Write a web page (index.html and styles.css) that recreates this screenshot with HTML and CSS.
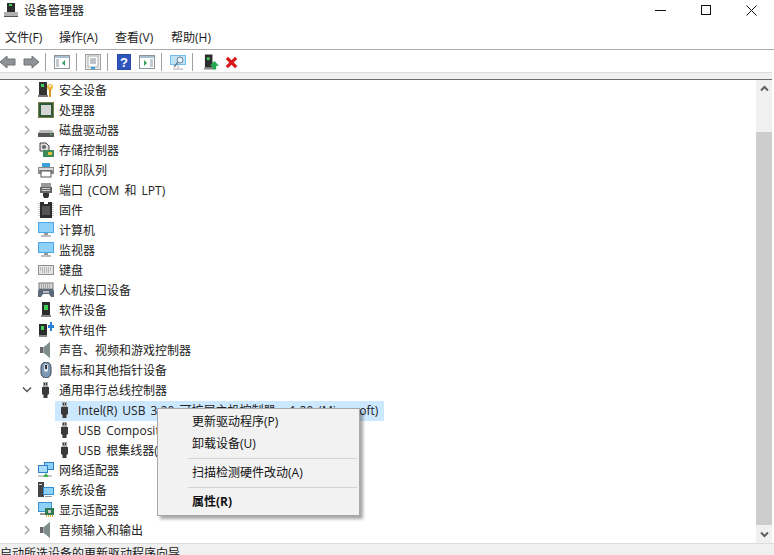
FILE: index.html
```html
<!DOCTYPE html>
<html lang="zh">
<head>
<meta charset="utf-8">
<title>设备管理器</title>
<link rel="stylesheet" href="styles.css">
</head>
<body>
<svg class="defs" width="0" height="0">
<defs>
<symbol id="chev-r" viewBox="0 0 7 10"><path d="M1 1l4 4-4 4" fill="none" stroke="#a6a6a6" stroke-width="1.5"/></symbol>
<symbol id="chev-d" viewBox="0 0 10 8"><path d="M1 1.5l4 4 4-4" fill="none" stroke="#555" stroke-width="1.5"/></symbol>
<symbol id="i-sec" viewBox="0 0 16 16"><rect x="1" y="0" width="8" height="13" fill="#333"/><rect x="3" y="2" width="3" height="3" fill="#3fd05a"/><rect x="0" y="13" width="10" height="2" fill="#777"/><circle cx="12" cy="5" r="3" fill="#f0b840"/><circle cx="12" cy="4" r="1" fill="#fff"/><path d="M11 7h2v8h-2z" fill="#d99a20"/></symbol>
<symbol id="i-cpu" viewBox="0 0 16 16"><rect x="0" y="0" width="16" height="16" fill="#2f5a3c"/><rect x="0.5" y="0.5" width="15" height="15" fill="none" stroke="#c8a050" stroke-dasharray="1 1"/><rect x="3" y="3" width="10" height="10" fill="#d6d6d6"/></symbol>
<symbol id="i-disk" viewBox="0 0 16 16"><path d="M2 8h12l2 3v3H0v-3z" fill="#b8b8b8"/><rect x="0" y="11" width="16" height="4" fill="#555"/><rect x="12" y="12" width="2" height="1" fill="#4fd060"/></symbol>
<symbol id="i-stor" viewBox="0 0 16 16"><path d="M2 1h6l3 3v5H2z" fill="#ddd" stroke="#444"/><circle cx="6" cy="5" r="2" fill="#666"/><rect x="5" y="8" width="11" height="7" fill="#3a8a5a"/><rect x="10" y="10" width="4" height="3" fill="#e0c040"/></symbol>
<symbol id="i-print" viewBox="0 0 16 16"><rect x="4" y="1" width="8" height="5" fill="#3da0d8"/><rect x="0" y="5" width="16" height="7" fill="#8a8a8a"/><rect x="1" y="6" width="14" height="2" fill="#d8d8d8"/><rect x="3" y="9" width="10" height="6" fill="#fff" stroke="#555"/></symbol>
<symbol id="i-port" viewBox="0 0 16 16"><rect x="3" y="1" width="10" height="4" fill="#999"/><rect x="2" y="5" width="12" height="6" fill="#666"/><path d="M5 11h6v3l-1 2H6l-1-2z" fill="#333"/><rect x="4" y="6" width="8" height="1" fill="#ccc"/><rect x="4" y="8" width="8" height="1" fill="#ccc"/></symbol>
<symbol id="i-fw" viewBox="0 0 16 16"><path d="M2 0h4v2h4V0h4v16H2z" fill="#2e2e2e"/><path d="M1 1v14M15 1v14" stroke="#999" stroke-dasharray="1 1"/><rect x="4" y="4" width="8" height="9" fill="#555"/></symbol>
<symbol id="i-mon" viewBox="0 0 16 16"><rect x="0" y="0" width="16" height="11" fill="#4aa8e8"/><rect x="1" y="1" width="14" height="9" fill="#8fd0f8"/><rect x="6" y="11" width="4" height="2" fill="#999"/><rect x="3" y="13" width="10" height="2" fill="#bbb"/></symbol>
<symbol id="i-kbd" viewBox="0 0 16 16"><rect x="0" y="3" width="16" height="10" fill="#8f8f8f"/><rect x="1" y="4" width="14" height="8" fill="#e4e4e4"/><path d="M2 6h12M2 8h12M4 10h8" stroke="#8a8a8a" stroke-dasharray="1 1"/></symbol>
<symbol id="i-hid" viewBox="0 0 16 16"><rect x="1" y="1" width="14" height="6" fill="#d8d8d8" stroke="#777"/><path d="M3 3h10M3 5h10" stroke="#777" stroke-dasharray="1 1"/><path d="M0 9l1-2h14l1 2v6h-3l-2-3H5l-2 3H0z" fill="#5a6a7a"/><rect x="5" y="9" width="6" height="2" fill="#bbb"/></symbol>
<symbol id="i-dev" viewBox="0 0 16 16"><rect x="4" y="0" width="8" height="13" fill="#2c2c2c"/><rect x="6" y="3" width="4" height="5" fill="#3fd05a"/><rect x="3" y="13" width="10" height="2" fill="#888"/></symbol>
<symbol id="i-comp" viewBox="0 0 16 16"><rect x="1" y="2" width="8" height="11" fill="#2c2c2c"/><rect x="3" y="4" width="3" height="4" fill="#3fd05a"/><rect x="1" y="13" width="8" height="2" fill="#888"/><path d="M10 3h2V0h2v3h2v3h-2v3h-2V6h-2z" fill="#2a82d8"/></symbol>
<symbol id="i-snd" viewBox="0 0 16 16"><path d="M2 5h4l6-5v16l-6-5H2z" fill="#a8a8a8"/><path d="M6 5l6-5v16l-6-5z" fill="#7f8c8c"/><rect x="2" y="5" width="3" height="6" fill="#666"/></symbol>
<symbol id="i-mouse" viewBox="0 0 16 16"><rect x="3" y="0" width="10" height="16" rx="5" fill="#7c97b2" stroke="#3e4a58"/><rect x="6" y="2" width="4" height="8" rx="2" fill="#d8e2ec"/><rect x="7" y="3" width="2" height="4" fill="#333"/></symbol>
<symbol id="i-usb" viewBox="0 0 16 16"><rect x="5" y="0" width="5" height="5" fill="#a8a8a8"/><rect x="6" y="1" width="1" height="2" fill="#333"/><rect x="8" y="1" width="1" height="2" fill="#333"/><path d="M4 5h7v7l-1.500 1v3h-4v-3L4 12z" fill="#3a3a3a"/></symbol>
<symbol id="i-net" viewBox="0 0 16 16"><rect x="6" y="0" width="10" height="8" fill="#2f80c8"/><rect x="7" y="1" width="8" height="6" fill="#8fd0f8"/><rect x="0" y="3" width="10" height="8" fill="#2f80c8"/><rect x="1" y="4" width="8" height="6" fill="#a8dcfa"/><rect x="0" y="13" width="14" height="2" fill="#ccc"/><path d="M5 15l3-4 3 4z" fill="#3fb050"/></symbol>
<symbol id="i-sys" viewBox="0 0 16 16"><rect x="0" y="0" width="6" height="15" fill="#444"/><rect x="1" y="2" width="3" height="1" fill="#ddd"/><rect x="5" y="5" width="11" height="8" fill="#2f90d8"/><rect x="6" y="6" width="9" height="6" fill="#8fd0f8"/><rect x="7" y="14" width="7" height="1" fill="#999"/></symbol>
<symbol id="i-disp" viewBox="0 0 16 16"><rect x="0" y="0" width="14" height="10" fill="#3b90d0"/><rect x="1" y="1" width="12" height="8" fill="#8fd0f8"/><rect x="2" y="11" width="6" height="2" fill="#999"/><rect x="7" y="6" width="9" height="7" fill="#2f7a52"/><rect x="10" y="8" width="3" height="3" fill="#ccc"/><path d="M8 14h7" stroke="#d8b030" stroke-width="2" stroke-dasharray="1 1"/></symbol>
</defs>
</svg>

<div class="window">
  <header class="titlebar">
    <div class="title-left">
      <svg class="app-icon" viewBox="0 0 14 14"><rect x="3" y="0" width="8" height="9" fill="#2c2c2c"/><rect x="5" y="1" width="3" height="2" fill="#3fd05a"/><rect x="0" y="9" width="14" height="4" fill="#b0b0b0"/><rect x="0" y="13" width="14" height="1" fill="#555"/></svg>
      <span>设备管理器</span>
    </div>
    <div class="win-ctrls">
      <svg viewBox="0 0 11 11" class="wc"><path d="M0 5.5h11" stroke="#111" fill="none"/></svg>
      <svg viewBox="0 0 11 11" class="wc"><rect x=".5" y=".5" width="9" height="9" stroke="#111" fill="none"/></svg>
      <svg viewBox="0 0 11 11" class="wc"><path d="M.5.5l10 10M10.500.5l-10 10" stroke="#111" fill="none"/></svg>
    </div>
  </header>
  <nav class="menubar">
    <span>文件(F)</span><span>操作(A)</span><span>查看(V)</span><span>帮助(H)</span>
  </nav>
  <div class="toolbar">
    <svg class="tb tb-arrow" viewBox="0 0 16 16"><path d="M0 8l7-6v3h8v6H7v3z" fill="#8f9296" stroke="#6f7276"/></svg>
    <svg class="tb tb-arrow2" viewBox="0 0 16 16"><path d="M16 8L9 2v3H1v6h8v3z" fill="#8f9296" stroke="#6f7276"/></svg>
    <i class="sep"></i>
    <svg class="tb" viewBox="0 0 16 16"><rect x=".5" y="1.500" width="15" height="13" fill="#fff" stroke="#8a959e"/><rect x="1" y="2" width="14" height="2" fill="#a9c0d0"/><path d="M2 6h3M2 8h3M2 10h3M2 12h3" stroke="#8a959e"/><path d="M11 6v6l-3-3z" fill="#2f9f55"/></svg>
    <i class="sep"></i>
    <svg class="tb" viewBox="0 0 16 16"><rect x=".5" y=".5" width="15" height="15" fill="#eee" stroke="#9aa0a6"/><rect x="3" y="2" width="10" height="11" fill="#fff" stroke="#aaa"/><path d="M5 5h6M5 7h6M5 9h6" stroke="#7f8a94"/><rect x="6" y="13" width="4" height="2" fill="#3aa0e0"/></svg>
    <i class="sep"></i>
    <svg class="tb tb-help" viewBox="0 0 14 16"><rect width="14" height="16" fill="#2a4aa8"/><path d="M1 1h12v14H1z" fill="#2f55bd"/><text x="7" y="13" font-size="13" font-weight="700" font-family="Liberation Sans" fill="#fff" text-anchor="middle">?</text></svg>
    <svg class="tb tb-r" viewBox="0 0 16 16"><rect x=".5" y="1.500" width="15" height="13" fill="#fff" stroke="#8a959e"/><rect x="1" y="2" width="14" height="2" fill="#a9c0d0"/><path d="M11 6h3M11 8h3M11 10h3M11 12h3" stroke="#8a959e"/><path d="M5 6v6l3-3z" fill="#2f9f55"/></svg>
    <i class="sep"></i>
    <svg class="tb" viewBox="0 0 16 16"><rect x="0" y="1" width="16" height="10" fill="#6fbdec"/><rect x="1" y="2" width="14" height="8" fill="#bfe4fa"/><path d="M3 15h10" stroke="#aaa"/><path d="M8 11v3" stroke="#aaa"/><circle cx="10" cy="6" r="3" fill="#e8f4fb" stroke="#6f7f8c"/><path d="M8 8l-4 5" stroke="#6f7f8c" stroke-width="1.500"/></svg>
    <i class="sep"></i>
    <svg class="tb tb-dev" viewBox="0 0 16 16"><rect x="1" y="0" width="8" height="14" fill="#2c2c2c"/><rect x="3" y="3" width="3" height="3" fill="#3fd05a"/><rect x="0" y="14" width="10" height="2" fill="#888"/><path d="M11 7l5 5h-3v4H9v-4H6z" fill="#22a850"/></svg>
    <svg class="tb tb-x" viewBox="0 0 14 14"><path d="M2 2l10 10M12 2L2 12" stroke="#d81818" stroke-width="3.400" fill="none"/></svg>
  </div>
  <div class="band"></div>
  <main class="content">
    <div class="tree">
      <div class="row"><svg class="chev"><use href="#chev-r"/></svg><svg class="ico"><use href="#i-sec"/></svg><span>安全设备</span></div>
      <div class="row"><svg class="chev"><use href="#chev-r"/></svg><svg class="ico"><use href="#i-cpu"/></svg><span>处理器</span></div>
      <div class="row"><svg class="chev"><use href="#chev-r"/></svg><svg class="ico"><use href="#i-disk"/></svg><span>磁盘驱动器</span></div>
      <div class="row"><svg class="chev"><use href="#chev-r"/></svg><svg class="ico"><use href="#i-stor"/></svg><span>存储控制器</span></div>
      <div class="row"><svg class="chev"><use href="#chev-r"/></svg><svg class="ico"><use href="#i-print"/></svg><span>打印队列</span></div>
      <div class="row"><svg class="chev"><use href="#chev-r"/></svg><svg class="ico"><use href="#i-port"/></svg><span>端口 (COM 和 LPT)</span></div>
      <div class="row"><svg class="chev"><use href="#chev-r"/></svg><svg class="ico"><use href="#i-fw"/></svg><span>固件</span></div>
      <div class="row"><svg class="chev"><use href="#chev-r"/></svg><svg class="ico"><use href="#i-mon"/></svg><span>计算机</span></div>
      <div class="row"><svg class="chev"><use href="#chev-r"/></svg><svg class="ico"><use href="#i-mon"/></svg><span>监视器</span></div>
      <div class="row"><svg class="chev"><use href="#chev-r"/></svg><svg class="ico"><use href="#i-kbd"/></svg><span>键盘</span></div>
      <div class="row"><svg class="chev"><use href="#chev-r"/></svg><svg class="ico"><use href="#i-hid"/></svg><span>人机接口设备</span></div>
      <div class="row"><svg class="chev"><use href="#chev-r"/></svg><svg class="ico"><use href="#i-dev"/></svg><span>软件设备</span></div>
      <div class="row"><svg class="chev"><use href="#chev-r"/></svg><svg class="ico"><use href="#i-comp"/></svg><span>软件组件</span></div>
      <div class="row"><svg class="chev"><use href="#chev-r"/></svg><svg class="ico"><use href="#i-snd"/></svg><span>声音、视频和游戏控制器</span></div>
      <div class="row"><svg class="chev"><use href="#chev-r"/></svg><svg class="ico"><use href="#i-mouse"/></svg><span>鼠标和其他指针设备</span></div>
      <div class="row"><svg class="chev chev-open"><use href="#chev-d"/></svg><svg class="ico"><use href="#i-usb"/></svg><span>通用串行总线控制器</span></div>
      <div class="row child selected"><svg class="ico"><use href="#i-usb"/></svg><span>Intel(R) USB 3.20 可扩展主机控制器 - 1.20 (Microsoft)</span></div>
      <div class="row child"><svg class="ico"><use href="#i-usb"/></svg><span>USB Composite Device</span></div>
      <div class="row child"><svg class="ico"><use href="#i-usb"/></svg><span>USB 根集线器(USB 3.0)</span></div>
      <div class="row"><svg class="chev"><use href="#chev-r"/></svg><svg class="ico"><use href="#i-net"/></svg><span>网络适配器</span></div>
      <div class="row"><svg class="chev"><use href="#chev-r"/></svg><svg class="ico"><use href="#i-sys"/></svg><span>系统设备</span></div>
      <div class="row"><svg class="chev"><use href="#chev-r"/></svg><svg class="ico"><use href="#i-disp"/></svg><span>显示适配器</span></div>
      <div class="row"><svg class="chev"><use href="#chev-r"/></svg><svg class="ico"><use href="#i-snd"/></svg><span>音频输入和输出</span></div>
    </div>
    <div class="scrollbar">
      <button class="sb-btn"><svg viewBox="0 0 9 7" class="sb-arrow"><path d="M1 5.500l3.500-3.500L8 5.500" fill="none" stroke="#606060" stroke-width="2"/></svg></button>
      <div class="sb-track"><div class="sb-thumb"></div></div>
      <button class="sb-btn sb-btn-end"><svg viewBox="0 0 9 7" class="sb-arrow"><path d="M1 1.500L4.500 5 8 1.500" fill="none" stroke="#606060" stroke-width="2"/></svg></button>
    </div>
  </main>
  <footer class="status">启动所选设备的更新驱动程序向导。</footer>
  <div class="context-menu">
    <div class="cm-item">更新驱动程序(P)</div>
    <div class="cm-item cm-b">卸载设备(U)</div>
    <hr class="cm-sep">
    <div class="cm-item">扫描检测硬件改动(A)</div>
    <hr class="cm-sep">
    <div class="cm-item cm-bold">属性(R)</div>
  </div>
</div>
</body>
</html>
```
FILE: styles.css
```css
* { box-sizing: border-box; }
html, body { margin: 0; padding: 0; }
body {
  width: 774px; height: 555px; overflow: hidden; background: #fff;
  font-family: "Open Sans", "Noto Sans CJK SC", sans-serif;
  font-size: 12px; color: #1a1a1a;
}
.defs { position: absolute; }
.window { position: relative; width: 774px; height: 555px; display: flex; flex-direction: column; }
.titlebar { height: 29px; display: flex; justify-content: space-between; align-items: flex-start; flex: none; }
.title-left { display: flex; align-items: center; gap: 6px; padding: 3px 0 0 4px; height: 17px; }
.app-icon { width: 14px; height: 14px; }
.win-ctrls { display: flex; gap: 34.5px; padding: 5px 17px 0 0; }
.wc { width: 11px; height: 11px; }
.menubar { height: 21px; flex: none; display: flex; padding-left: 5px; border-bottom: 1px solid #ababab; align-items: center; padding-bottom: 4px; }
.menubar span { width: 56px; white-space: nowrap; }
.menubar span:first-child { width: 54px; }
.toolbar { height: 22px; flex: none; display: flex; align-items: center; background: #fff; padding-top: 2px; }
.tb { width: 16px; height: 16px; margin-left: 9px; flex: none; }
.tb-arrow { margin-left: 0; }
.tb-arrow2 { margin-left: 7px; width: 16px; }
.sep { width: 1px; height: 18px; background: #a0a0a0; margin-left: 6px; flex: none; }
.toolbar .sep + .tb { margin-left: 8px; }
.toolbar .sep + .tb-help { margin-left: 9px; width: 14px; }
.tb-r { margin-left: 8px; }
.toolbar .sep + .tb-dev { margin-left: 11px; width: 15px; }
.tb-x { margin-left: 6px; width: 13px; height: 13px; }
.band { height: 8px; flex: none; background: #f0f0f0; border-top: 1px solid #dcdcdc; border-bottom: 1px solid #6e6e6e; margin-right: 2px; }
.content { height: 463px; flex: none; display: flex; overflow: hidden; margin-right: 2px; }
.tree { flex: 1; min-width: 0; }
.row { height: 20px; display: flex; align-items: center; white-space: nowrap; padding-left: 24px; color: #222; word-spacing: 2px; }
.chev { width: 7px; height: 10px; flex: none; }
.chev-open { width: 10px; height: 8px; margin-left: -2px; margin-right: -1px; }
.ico { width: 16px; height: 16px; flex: none; margin-left: 7px; margin-right: 5px; }
.child { padding-left: 0; margin-left: 55px; width: 329px; }
.child .ico { margin-left: 2px; margin-right: 5px; }
.selected { background: #cce8ff; position: relative; top: 1px; }
.selected .ico, .selected span { position: relative; top: -1px; }
.scrollbar { width: 16px; flex: none; background: #f0f0f0; display: flex; flex-direction: column; }
.sb-btn { height: 17px; padding: 0; border: 0; background: #f0f0f0; flex: none; display: flex; align-items: center; justify-content: center; }
.sb-btn-end { height: 18px; }
.sb-arrow { width: 9px; height: 7px; }
.sb-track { flex: 1; padding-top: 35px; display: flex; }
.sb-thumb { flex: 1; background: #cdcdcd; }
.status { height: 12px; flex: none; background: #f0f0f0; border-top: 1px solid #dcdcdc; font-size: 12px; line-height: 12px; padding: 4px 0 0 0; overflow: hidden; white-space: nowrap; }
.context-menu { position: absolute; left: 157px; top: 408px; width: 203px; height: 108px; background: #f2f2f2; border: 1px solid #a8a8a8; box-shadow: 3px 3px 3px rgba(0,0,0,.35); padding-top: 2px; }
.cm-item { height: 22px; line-height: 21px; padding-left: 34px; white-space: nowrap; color: #111; }
.cm-sep { height: 1px; border: 0; background: #d4d4d4; margin: 3px 2px 3px 30px; }
.cm-b { margin-bottom: 1px; }
.cm-bold { font-weight: 700; }
```
